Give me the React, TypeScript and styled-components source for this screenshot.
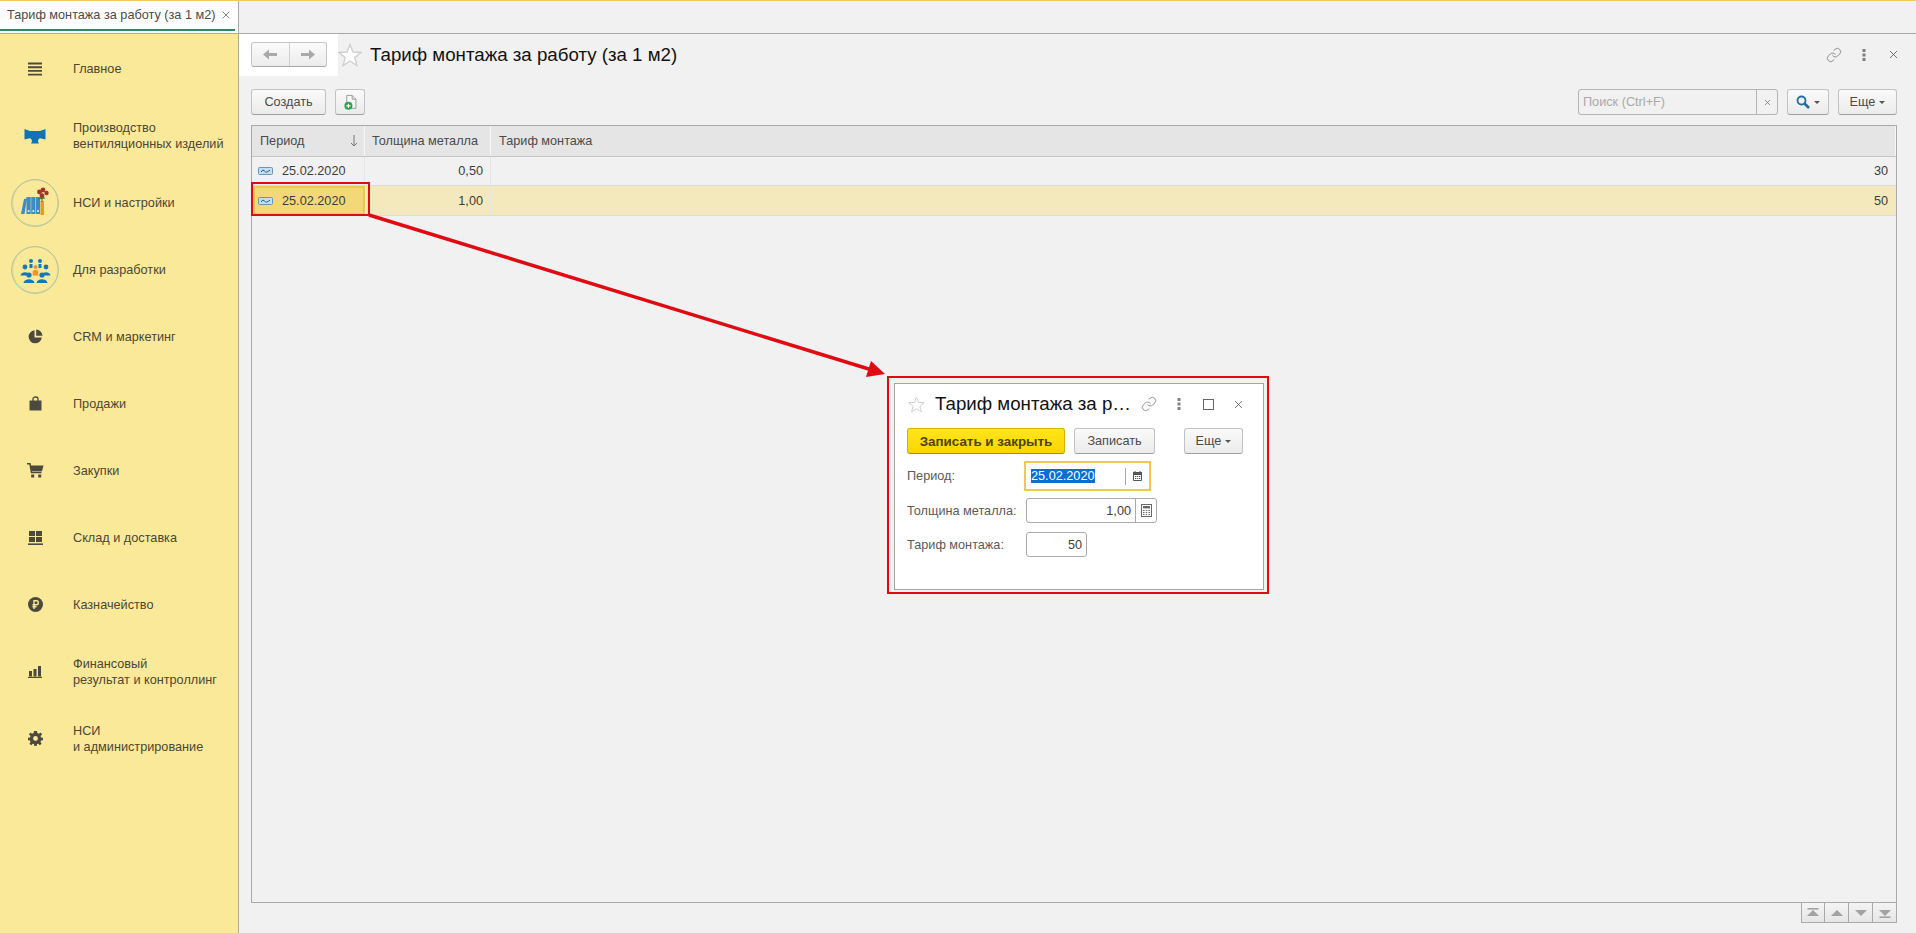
import React from 'react'
import styled, { createGlobalStyle } from 'styled-components'
import { Link, X } from 'lucide-react'

const GlobalStyle = createGlobalStyle`
  html, body {
    margin: 0;
    padding: 0;
    background: #f1f1f1;
    font-family: 'Liberation Sans', Arial, sans-serif;
    font-size: 12.7px;
    color: #4a4a4a;
  }
  * { box-sizing: border-box; }
`

const Page = styled.div`
  position: relative;
  width: 1916px;
  height: 933px;
  overflow: hidden;
  display: flex;
  flex-direction: column;
`

const TabBar = styled.div`
  height: 34px;
  flex: none;
  display: flex;
  background: #f1f1f1;
  border-top: 1px solid #eccb57;
  border-bottom: 1px solid #a9a9a9;
`

const Tab = styled.div`
  width: 239px;
  background: #fff;
  border-right: 1px solid #a9a9a9;
  display: flex;
  justify-content: space-between;
  align-items: center;
  padding: 0 6px 4px 7px;
  position: relative;
  font-size: 12.7px;
  color: #4a4a4a;
  &:after {
    content: '';
    position: absolute;
    left: 0;
    right: 3px;
    bottom: 2px;
    height: 2px;
    background: #2c8a60;
  }
`

const Body = styled.div`
  flex: 1;
  display: flex;
  min-height: 0;
`

const Sidebar = styled.nav`
  width: 239px;
  flex: none;
  background: #fbe99a;
  border-right: 1px solid #b0ab8c;
  padding-top: 1px;
`

const SideItem = styled.div`
  height: 67px;
  display: flex;
  align-items: center;
`

const SideIcon = styled.div`
  width: 73px;
  flex: none;
  display: flex;
  justify-content: center;
  align-items: center;
  padding-right: 3px;
  height: 48px;
`

const SideLabel = styled.div`
  font-size: 12.7px;
  line-height: 16px;
  color: #4b4732;
  white-space: pre-line;
`

const Main = styled.main`
  flex: 1;
  min-width: 0;
  display: flex;
  flex-direction: column;
  padding: 0 19px 10px 12px;
`

const Header = styled.header`
  height: 42px;
  flex: none;
  display: flex;
  align-items: center;
`

const NavWrap = styled.div`
  height: 42px;
  margin-left: -12px;
  padding: 8px 11px 0 12px;
  background: #fff;
`

const NavGroup = styled.div`
  width: 76px;
  height: 25px;
  display: flex;
  border: 1px solid #c4c4c4;
  border-bottom-color: #a8a8a8;
  border-radius: 3px;
  background: linear-gradient(#fbfbfb, #ececec);
`

const NavButton = styled.div<{ $divided?: boolean }>`
  flex: 1;
  display: flex;
  align-items: center;
  justify-content: center;
  border-left: ${props => (props.$divided ? '1px solid #d0d0d0' : 'none')};
`

const Title = styled.h1`
  margin: 0 0 0 8px;
  font-size: 18.7px;
  font-weight: normal;
  color: #111;
  white-space: nowrap;
`

const HeaderTools = styled.div`
  margin-left: auto;
  display: flex;
  align-items: center;
  gap: 19px;
  margin-right: -2px;
  margin-top: -1px;
`

const ToolSlot = styled.div`
  width: 11px;
  height: 16px;
  display: flex;
  align-items: center;
  justify-content: center;
  overflow: visible;
  & > svg { flex: none; }
`

const Toolbar = styled.div`
  margin-top: 13px;
  height: 26px;
  flex: none;
  display: flex;
`

const Button = styled.div<{ $width: number; $gap?: number }>`
  width: ${props => props.$width}px;
  height: 26px;
  margin-left: ${props => props.$gap ?? 0}px;
  display: flex;
  align-items: center;
  justify-content: center;
  gap: 4px;
  flex: none;
  font-size: 12.7px;
  color: #4a4a4a;
  border: 1px solid #c2c2c2;
  border-bottom-color: #9f9f9f;
  border-radius: 3px;
  background: linear-gradient(#fafafa, #ebebeb);
`

const PrimaryButton = styled(Button)`
  font-size: 13.4px;
  font-weight: bold;
  color: #4e4310;
  border-color: #d5b100;
  border-bottom-color: #a98f10;
  background: linear-gradient(#ffe61a, #fad400);
`

const SearchBox = styled.div`
  margin-left: auto;
  width: 200px;
  height: 26px;
  display: flex;
  border: 1px solid #b4b4b4;
  border-radius: 3px;
`

const SearchInput = styled.div`
  flex: 1;
  padding-left: 4px;
  line-height: 24px;
  font-size: 12.7px;
  color: #a9a9a9;
`

const SearchClear = styled.div`
  width: 21px;
  display: flex;
  align-items: center;
  justify-content: center;
  border-left: 1px solid #b4b4b4;
`

const Caret = styled.span`
  width: 0;
  height: 0;
  border-left: 3px solid transparent;
  border-right: 3px solid transparent;
  border-top: 3px solid #555;
`

const Table = styled.div`
  margin-top: 10px;
  flex: 1;
  min-height: 0;
  border: 1px solid #a9a9a9;
  display: flex;
  flex-direction: column;
`

const Row = styled.div<{ $selected?: boolean }>`
  display: grid;
  grid-template-columns: 113px 126px 1fr;
  height: ${props => (props.$selected ? 30 : 29)}px;
  border-bottom: 1px solid #dcdcdc;
  background: ${props => (props.$selected ? '#f4e8bd' : 'transparent')};
`

const HeadRow = styled(Row)`
  height: 31px;
  background: #e5e5e5;
  border-bottom: 1px solid #c6c6c6;
`

const HeadCell = styled.div`
  display: flex;
  align-items: center;
  justify-content: space-between;
  padding: 0 6px 0 8px;
  font-size: 12.7px;
  border-right: 1px solid #f7f7f7;
  &:nth-child(2) { padding-left: 7px; }
`

const Cell = styled.div`
  display: flex;
  align-items: center;
  justify-content: flex-end;
  padding-right: 7px;
  font-size: 12.7px;
  color: #3c3c3c;
  border-right: 1px solid #e6e6e6;
  &:last-child { border-right: none; padding-right: 8px; }
`

const DateCell = styled.div<{ $selected?: boolean }>`
  display: flex;
  align-items: center;
  gap: 9px;
  padding-left: ${props => (props.$selected ? '3px' : '6px')};
  font-size: 12.7px;
  color: #3c3c3c;
  ${props =>
    props.$selected
      ? `margin: 0 0 0 1px; background: #f3d877; border: 2px solid #ecc94f;`
      : `border-right: 1px solid #e6e6e6;`}
`

const TableSpace = styled.div`
  flex: 1;
`

const Pager = styled.div`
  height: 20px;
  flex: none;
  align-self: flex-end;
  display: flex;
`

const PagerButton = styled.div`
  width: 24px;
  display: flex;
  align-items: center;
  justify-content: center;
  border: 1px solid #a9a9a9;
  border-top: none;
  border-left-width: 0;
  background: linear-gradient(#f4f4f4, #e6e6e6);
  &:first-child { border-left-width: 1px; }
`

const CalloutFrame = styled.div`
  position: absolute;
  border: 2px solid #e00b12;
`

const CellCallout = styled(CalloutFrame)`
  left: 251px;
  top: 182px;
  width: 119px;
  height: 34px;
`

const DialogCallout = styled(CalloutFrame)`
  left: 887px;
  top: 376px;
  width: 382px;
  height: 218px;
  padding: 5px 3px 2px 5px;
  background: #f1f1f1;
`

const Dialog = styled.div`
  width: 100%;
  height: 100%;
  background: #fff;
  border: 1px solid #a5a5a5;
  padding: 2px 0 0 12px;
`

const DialogHead = styled.div`
  height: 36px;
  padding-left: 1px;
  display: flex;
  align-items: center;
`

const DialogTitle = styled.div`
  margin-left: 10px;
  width: 200px;
  font-size: 18.7px;
  color: #111;
  white-space: nowrap;
`

const DialogTools = styled.div`
  display: flex;
  align-items: center;
  gap: 19px;
  margin-left: 8px;
`

const DialogButtons = styled.div`
  display: flex;
  margin-top: 6px;
`

const FormRow = styled.div<{ $height: number; $gap: number }>`
  height: ${props => props.$height}px;
  margin-top: ${props => props.$gap}px;
  display: flex;
  align-items: center;
`

const FormLabel = styled.div`
  width: 119px;
  font-size: 12.7px;
  color: #5a5a5a;
  flex: none;
`

const Field = styled.div<{ $width: number; $focused?: boolean }>`
  width: ${props => props.$width}px;
  height: ${props => (props.$focused ? 30 : 25)}px;
  margin-left: ${props => (props.$focused ? -2 : 0)}px;
  display: flex;
  align-items: center;
  border: ${props => (props.$focused ? '2px solid #efc94c' : '1px solid #a9a9a9')};
  border-radius: ${props => (props.$focused ? 0 : 3)}px;
  font-size: 12.7px;
  color: #3c3c3c;
`

const FieldValue = styled.div<{ $left?: boolean }>`
  flex: 1;
  text-align: ${props => (props.$left ? 'left' : 'right')};
  padding: 0 ${props => (props.$left ? 0 : 4)}px 0 ${props => (props.$left ? 5 : 0)}px;
`

const Selected = styled.span`
  background: #0a6fd0;
  color: #fff;
`

const FieldAddon = styled.div<{ $width: number; $short?: boolean }>`
  width: ${props => props.$width}px;
  height: ${props => (props.$short ? 17 : 23)}px;
  display: flex;
  align-items: center;
  justify-content: center;
  flex: none;
  border-left: 1px solid #a9a9a9;
`

const Overlay = styled.svg`
  position: absolute;
  left: 0;
  top: 0;
  pointer-events: none;
`

const Dots = () => (
  <svg width="4" height="12" viewBox="0 0 4 12">
    <g fill="#808080">
      <rect x="0.5" y="0" width="3" height="3" />
      <rect x="0.5" y="4.5" width="3" height="3" />
      <rect x="0.5" y="9" width="3" height="3" />
    </g>
  </svg>
)

const Star = ({ size }: { size: number }) => (
  <svg width={size} height={size} viewBox="0 0 24 24">
    <polygon
      points="12,1.5 15,9 23,9.5 16.8,14.6 18.9,22.5 12,18 5.1,22.5 7.2,14.6 1,9.5 9,9"
      fill="#fff"
      stroke="#cfcfcf"
      strokeWidth="1.4"
    />
  </svg>
)

const Arrow = ({ back }: { back?: boolean }) => (
  <svg width="14" height="11" viewBox="0 0 14 11" style={back ? undefined : { transform: 'scaleX(-1)' }}>
    <polygon points="0,5.5 6,0.5 6,4 14,4 14,7 6,7 6,10.5" fill="#a9a9a9" />
  </svg>
)

const RecordIcon = () => (
  <svg width="15" height="8" viewBox="0 0 15 8">
    <rect x="0.5" y="0.5" width="14" height="7" rx="1" fill="#c6dcef" stroke="#6d94b5" />
    <path d="M3 5 Q5 1.5 6.5 4 T12 3.2" fill="none" stroke="#1f5f95" strokeWidth="1" />
  </svg>
)

const NewDocIcon = () => (
  <svg width="15" height="17" viewBox="0 0 18 20">
    <path d="M4.5 1.5H11L15.5 6V17H4.5Z" fill="#f7f7f7" stroke="#8d8d8d" />
    <path d="M11 1.5V6H15.5" fill="#e4e4e4" stroke="#8d8d8d" />
    <circle cx="6.5" cy="14" r="4.8" fill="#2ba148" />
    <path d="M6.5 11.5V16.5M4 14H9" stroke="#fff" strokeWidth="1.4" />
  </svg>
)

const SearchGlyph = () => (
  <svg width="14" height="14" viewBox="0 0 14 14">
    <circle cx="5.5" cy="5.5" r="4" fill="none" stroke="#1d6f9f" strokeWidth="1.8" />
    <path d="M8.5 8.5L13 13" stroke="#1d6f9f" strokeWidth="2.6" />
  </svg>
)

const CalendarIcon = () => (
  <svg width="9" height="10" viewBox="0 0 9 10">
    <path d="M0.5 1.5H8.5V9.5H0.5Z" fill="#fff" stroke="#555" />
    <rect x="0" y="1" width="9" height="3" fill="#555" />
    <path d="M2 0V2M7 0V2" stroke="#555" />
    <path d="M2 5.5H3.2M4 5.5H5.2M6 5.5H7.2M2 7.5H3.2M4 7.5H5.2M6 7.5H7.2" stroke="#555" />
  </svg>
)

const CalcIcon = () => (
  <svg width="11" height="13" viewBox="0 0 11 13">
    <rect x="0.5" y="0.5" width="10" height="12" fill="#fff" stroke="#666" />
    <rect x="2" y="2" width="7" height="2.4" fill="#666" />
    <path d="M2 6.5H3.5M4.7 6.5H6.2M7.5 6.5H9M2 8.5H3.5M4.7 8.5H6.2M7.5 8.5H9M2 10.5H3.5M4.7 10.5H6.2M7.5 10.5H9" stroke="#666" />
  </svg>
)

const PagerIcon = ({ up, bar }: { up?: boolean; bar?: boolean }) => (
  <svg width="14" height="10" viewBox="0 0 14 10" style={up ? undefined : { transform: 'scaleY(-1)' }}>
    {bar && <rect x="1.5" y="0" width="11" height="1.6" fill="#a2a2a2" />}
    <polygon points="7,2 13,8 1,8" fill="#a2a2a2" />
  </svg>
)

const MenuIcon = () => (
  <svg width="16" height="16" viewBox="0 0 16 16">
    <path d="M1 2.5H15M1 6.2H15M1 9.9H15M1 13.6H15" stroke="#4c4a3e" strokeWidth="1.9" />
  </svg>
)

const PipeIcon = () => (
  <svg width="22" height="16" viewBox="0 0 22 16">
    <path
      d="M0.5 1L6 3H16L21.5 1V11.5L16 10.2C14.6 10.6 14 12 14 13.5L15 15.5H7L8 13.5C8 12 7.4 10.6 6 10.2L0.5 11.5Z"
      fill="#0f74b6"
    />
  </svg>
)

const PieIcon = () => (
  <svg width="15" height="15" viewBox="0 0 15 15">
    <path d="M6.5 1.2A6.6 6.6 0 1 0 13.8 8.5H6.5Z" fill="#4c4a3e" />
    <path d="M8.2 0.5A6.6 6.6 0 0 1 14.5 6.8H8.2Z" fill="#4c4a3e" />
  </svg>
)

const BagIcon = () => (
  <svg width="13" height="15" viewBox="0 0 13 15">
    <path d="M0.5 4.5H12.5V14.5H0.5Z" fill="#4c4a3e" />
    <path d="M4 6V2.8C4 0.4 9 0.4 9 2.8V6" fill="none" stroke="#4c4a3e" strokeWidth="1.3" />
  </svg>
)

const CartIcon = () => (
  <svg width="17" height="15" viewBox="0 0 17 15">
    <path d="M0 0.8H3L4.5 9.6H14.5" fill="none" stroke="#4c4a3e" strokeWidth="1.5" />
    <path d="M3.5 2.5H16.5L15 8.2H4.5Z" fill="#4c4a3e" />
    <rect x="4.2" y="11.5" width="3" height="3" fill="#4c4a3e" />
    <rect x="11.2" y="11.5" width="3" height="3" fill="#4c4a3e" />
  </svg>
)

const WarehouseIcon = () => (
  <svg width="15" height="14" viewBox="0 0 15 14">
    <g fill="#4c4a3e">
      <rect x="1" y="0" width="6" height="5" />
      <rect x="8" y="0" width="6" height="5" />
      <rect x="1" y="6" width="6" height="5" />
      <rect x="8" y="6" width="6" height="5" />
      <rect x="0" y="12.4" width="15" height="1.6" />
    </g>
  </svg>
)

const RubleIcon = () => (
  <svg width="15" height="15" viewBox="0 0 15 15">
    <circle cx="7.5" cy="7.5" r="7.5" fill="#4c4a3e" />
    <path d="M6 12V3.7H8.6C10.9 3.7 10.9 7.7 8.6 7.7H4.5M4.5 9.7H8.5" fill="none" stroke="#fbe99a" strokeWidth="1.4" />
  </svg>
)

const BarsIcon = () => (
  <svg width="14" height="12" viewBox="0 0 14 12">
    <g fill="#4c4a3e">
      <rect x="1" y="5" width="3" height="5.5" />
      <rect x="5.5" y="3" width="3" height="7.5" />
      <rect x="10" y="0" width="3" height="10.5" />
      <rect x="0" y="10.8" width="14" height="1.2" />
    </g>
  </svg>
)

const GearIcon = () => (
  <svg width="15" height="15" viewBox="0 0 15 15">
    <path
      d="M6 0H9L9.4 2.1 10.9 2.7 12.7 1.5 14.1 3.6 12.5 5 13 6.4 15 6.8V9.2L13 9.6 12.5 11 13.6 12.8 11.8 14.2 10.3 12.7 9 13 8.7 15H6.3L6 13 4.7 12.7 3.2 14.2 1.4 12.8 2.5 11 2 9.6 0 9.2V6.8L2 6.4 2.5 5 1 3.6 2.3 1.5 4.1 2.7 5.6 2.1Z"
      fill="#4c4a3e"
    />
    <circle cx="7.5" cy="7.5" r="2.4" fill="#fbe99a" />
  </svg>
)

const LogoRing = () => (
  <>
    <circle cx="24" cy="24" r="23.4" fill="none" stroke="#8fb3a0" strokeWidth="0.7" />
    <ellipse cx="24.3" cy="23.7" rx="22.6" ry="23" fill="none" stroke="#b3c29f" strokeWidth="0.5" />
  </>
)

const FoldersLogo = () => (
  <svg width="48" height="48" viewBox="0 0 48 48">
    <LogoRing />
    <g fill="#3d8cc7">
      <path d="M13 20L16 19.5L13.5 35H10Z" />
      <rect x="15.5" y="18" width="4.2" height="17" />
      <rect x="20.2" y="18" width="4.2" height="17" />
      <rect x="24.9" y="18" width="4.2" height="17" />
    </g>
    <g fill="#e7f1f8">
      <circle cx="17.6" cy="32" r="1" />
      <circle cx="22.3" cy="32" r="1" />
      <circle cx="27" cy="32" r="1" />
    </g>
    <path d="M29.5 22H33V36H29.5Z" fill="#e69a2d" />
    <g fill="#a8322c">
      <circle cx="28.5" cy="13" r="2.4" />
      <circle cx="32" cy="11" r="2.4" />
      <circle cx="35.5" cy="14" r="2.2" />
      <circle cx="31" cy="17" r="2.4" />
    </g>
    <path d="M31 23V14M27 20L34 19" stroke="#4d6b2f" strokeWidth="1" />
  </svg>
)

const PeopleLogo = () => (
  <svg width="48" height="48" viewBox="0 0 48 48">
    <LogoRing />
    <g fill="#1479b8">
      <circle cx="20" cy="15" r="2" />
      <circle cx="29" cy="15" r="2" />
      <rect x="18.5" y="18" width="3" height="4" />
      <rect x="27.5" y="18" width="3" height="4" />
      <circle cx="14" cy="21" r="2.4" />
      <circle cx="35" cy="21" r="2.4" />
      <path d="M9.5 29.5C10 25 18 25 19 29.5Z" />
      <path d="M30.5 29.5C31 25 39 25 39.5 29.5Z" />
      <circle cx="18" cy="29" r="2.6" />
      <circle cx="31" cy="29" r="2.6" />
      <path d="M12.5 37C13 32 23 32 23.5 37Z" />
      <path d="M25.5 37C26 32 36 32 36.5 37Z" />
    </g>
    <circle cx="24.5" cy="21" r="2" fill="#f0922b" />
    <path d="M21.7 29.5V25.5C22 23.5 27 23.5 27.3 25.5V29.5Z" fill="#f0922b" />
  </svg>
)

const sideItems: { label: string; icon: React.ReactNode }[] = [
  { label: 'Главное', icon: <MenuIcon /> },
  { label: 'Производство\nвентиляционных изделий', icon: <PipeIcon /> },
  { label: 'НСИ и настройки', icon: <FoldersLogo /> },
  { label: 'Для разработки', icon: <PeopleLogo /> },
  { label: 'CRM и маркетинг', icon: <PieIcon /> },
  { label: 'Продажи', icon: <BagIcon /> },
  { label: 'Закупки', icon: <CartIcon /> },
  { label: 'Склад и доставка', icon: <WarehouseIcon /> },
  { label: 'Казначейство', icon: <RubleIcon /> },
  { label: 'Финансовый\nрезультат и контроллинг', icon: <BarsIcon /> },
  { label: 'НСИ\nи администрирование', icon: <GearIcon /> }
]

const rows = [
  { date: '25.02.2020', thickness: '0,50', rate: '30', selected: false },
  { date: '25.02.2020', thickness: '1,00', rate: '50', selected: true }
]

const App = () => {
  return (
    <Page>
      <GlobalStyle />
      <TabBar>
        <Tab>
          <span>Тариф монтажа за работу (за 1 м2)</span>
          <X size={12} color="#555" strokeWidth={1.5} />
        </Tab>
      </TabBar>
      <Body>
        <Sidebar>
          {sideItems.map(item => (
            <SideItem key={item.label}>
              <SideIcon>{item.icon}</SideIcon>
              <SideLabel>{item.label}</SideLabel>
            </SideItem>
          ))}
        </Sidebar>
        <Main>
          <Header>
            <NavWrap>
              <NavGroup>
                <NavButton>
                  <Arrow back />
                </NavButton>
                <NavButton $divided>
                  <Arrow />
                </NavButton>
              </NavGroup>
            </NavWrap>
            <Star size={24} />
            <Title>Тариф монтажа за работу (за 1 м2)</Title>
            <HeaderTools>
              <ToolSlot>
                <Link size={16} color="#777" strokeWidth={1.2} />
              </ToolSlot>
              <ToolSlot>
                <Dots />
              </ToolSlot>
              <ToolSlot>
                <X size={13} color="#555" strokeWidth={1.5} />
              </ToolSlot>
            </HeaderTools>
          </Header>
          <Toolbar>
            <Button $width={75}>Создать</Button>
            <Button $width={30} $gap={9}>
              <NewDocIcon />
            </Button>
            <SearchBox>
              <SearchInput>Поиск (Ctrl+F)</SearchInput>
              <SearchClear>
                <X size={9} color="#666" strokeWidth={1.8} />
              </SearchClear>
            </SearchBox>
            <Button $width={42} $gap={9}>
              <SearchGlyph />
              <Caret />
            </Button>
            <Button $width={59} $gap={9}>
              Еще
              <Caret />
            </Button>
          </Toolbar>
          <Table>
            <HeadRow>
              <HeadCell>
                Период
                <svg width="8" height="12" viewBox="0 0 8 12">
                  <path d="M4 0V11M1 8L4 11L7 8" fill="none" stroke="#777" />
                </svg>
              </HeadCell>
              <HeadCell>Толщина металла</HeadCell>
              <HeadCell>Тариф монтажа</HeadCell>
            </HeadRow>
            {rows.map(row => (
              <Row key={row.thickness} $selected={row.selected}>
                <DateCell $selected={row.selected}>
                  <RecordIcon />
                  {row.date}
                </DateCell>
                <Cell>{row.thickness}</Cell>
                <Cell>{row.rate}</Cell>
              </Row>
            ))}
            <TableSpace />
          </Table>
          <Pager>
            <PagerButton>
              <PagerIcon up bar />
            </PagerButton>
            <PagerButton>
              <PagerIcon up />
            </PagerButton>
            <PagerButton>
              <PagerIcon />
            </PagerButton>
            <PagerButton>
              <PagerIcon bar />
            </PagerButton>
          </Pager>
        </Main>
      </Body>
      <CellCallout />
      <Overlay width="1916" height="933">
        <line x1="369" y1="215" x2="872" y2="370" stroke="#e00b12" strokeWidth="3.5" />
        <polygon points="885,374 866,377 871,361" fill="#e00b12" />
      </Overlay>
      <DialogCallout>
        <Dialog>
          <DialogHead>
            <Star size={17} />
            <DialogTitle>Тариф монтажа за р…</DialogTitle>
            <DialogTools>
              <ToolSlot>
                <Link size={16} color="#777" strokeWidth={1.2} />
              </ToolSlot>
              <ToolSlot>
                <Dots />
              </ToolSlot>
              <ToolSlot>
                <svg width="11" height="11" viewBox="0 0 11 11">
                  <rect x="0.5" y="0.5" width="10" height="10" fill="none" stroke="#666" />
                </svg>
              </ToolSlot>
              <ToolSlot>
                <X size={13} color="#555" strokeWidth={1.5} />
              </ToolSlot>
            </DialogTools>
          </DialogHead>
          <DialogButtons>
            <PrimaryButton $width={158}>Записать и закрыть</PrimaryButton>
            <Button $width={81} $gap={9}>Записать</Button>
            <Button $width={59} $gap={29}>
              Еще
              <Caret />
            </Button>
          </DialogButtons>
          <FormRow $height={30} $gap={7}>
            <FormLabel>Период:</FormLabel>
            <Field $width={127} $focused>
              <FieldValue $left>
                <Selected>25.02.2020</Selected>
              </FieldValue>
              <FieldAddon $width={24} $short>
                <CalendarIcon />
              </FieldAddon>
            </Field>
          </FormRow>
          <FormRow $height={25} $gap={7}>
            <FormLabel>Толщина металла:</FormLabel>
            <Field $width={131}>
              <FieldValue>1,00</FieldValue>
              <FieldAddon $width={21}>
                <CalcIcon />
              </FieldAddon>
            </Field>
          </FormRow>
          <FormRow $height={25} $gap={9}>
            <FormLabel>Тариф монтажа:</FormLabel>
            <Field $width={61}>
              <FieldValue>50</FieldValue>
            </Field>
          </FormRow>
        </Dialog>
      </DialogCallout>
    </Page>
  )
}

export default App
